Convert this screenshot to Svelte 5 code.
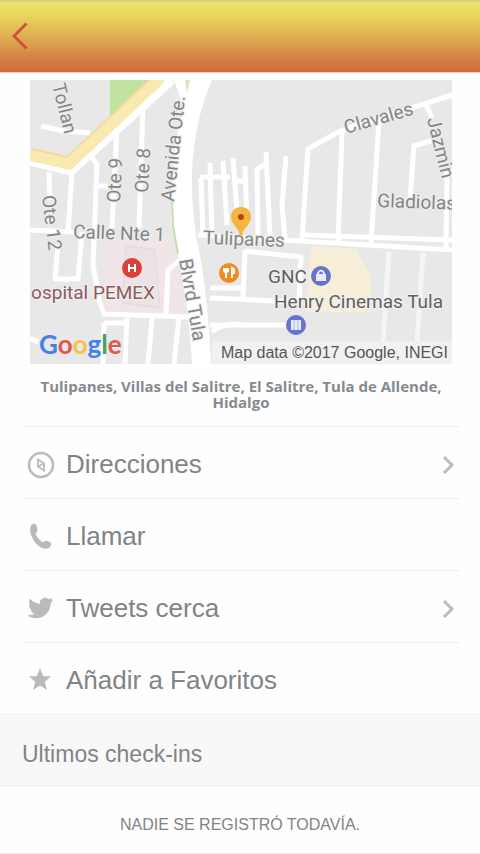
<script>
	const actions = [
		{ id: 'directions', label: 'Direcciones', icon: 'compass', more: true },
		{ id: 'call', label: 'Llamar', icon: 'phone', more: false },
		{ id: 'tweets', label: 'Tweets cerca', icon: 'bird', more: true },
		{ id: 'favorite', label: 'Añadir a Favoritos', icon: 'star', more: false }
	];

	// street centre lines, in map units
	const streets = [
		'M41 126 L64 131 L90 133',
		'M117 126 L112 228',
		'M143 103 L139 228',
		'M90 155 L97 164 L93 265 L99 300 L104 314 L190 317',
		'M97 186 H108',
		'M49 172 L50 200',
		'M72 172 L68 232',
		'M30 230 L75 232',
		'M58 245 L55 279 H78 L82 232',
		'M166 314 L168 270 L180 260',
		'M198 235 L452 250',
		'M302 235 L452 240',
		'M201 178 L203 235',
		'M200 177 H230',
		'M210 163 L212 235',
		'M223 161 L227 225',
		'M233 158 L238 225',
		'M245 166 L247 225',
		'M236 181 H245',
		'M266 152 L270 237',
		'M258 235 L257 169 L266 164',
		'M286 156 L282 205 L285 238',
		'M302 240 L308 149 L340 131 L452 95',
		'M342 131 L338 243',
		'M379 120 L371 243',
		'M426 104 L432 118',
		'M447 172 L446 248',
		'M410 200 L414 146 L434 140',
		'M245 250 L243 298',
		'M245 251 L301 257 L299 302 L210 298',
		'M210 288 H242',
		'M210 325 H290',
		'M212 332 Q224 322 240 325',
		'M104 323 H128',
		'M104 323 L103 364',
		'M127 318 L125 364',
		'M152 318 L148 364',
		'M179 318 L174 364',
		'M30 338 L38 342'
	];

	const lanes = ['M389 252 L383 342', 'M423 253 L417 342'];
</script>

<div class="page">
	<header>
		<button type="button" class="back" aria-label="Atrás">
			<svg viewBox="0 0 16 28" fill="none" aria-hidden="true">
				<path d="M14.500 1.500L2 14L14.500 26.500" stroke="currentColor" stroke-width="3" />
			</svg>
		</button>
	</header>

	<section class="place">
		<svg class="map" viewBox="30 80 422 284" role="img" aria-label="Mapa de Tulipanes">
			<rect x="30" y="80" width="422" height="284" fill="#e8e8e8" />
			<path d="M110 80H152L110 116Z" fill="#c2e2a1" />
			<path d="M106 242L172 239L186 315H104Z" fill="#f1e5e8" />
			<path d="M126 246L155 249L160 308L122 303Z" fill="#ebe2e6" stroke="#e2dae0" />
			<path d="M311 246L356 249L371 276L371 312H306Z" fill="#f6eed6" />

			<g fill="none" stroke="#f5f5f5" stroke-width="5">
				{#each lanes as d}
					<path {d} />
				{/each}
			</g>
			<g fill="none" stroke="#fff" stroke-width="5" stroke-linejoin="round">
				{#each streets as d}
					<path {d} />
				{/each}
			</g>

			<path d="M30 161L71 171L172 80" fill="none" stroke="#fff" stroke-width="9" />
			<path d="M30 154L69 163L159 78" fill="none" stroke="#f0dca0" stroke-width="13" />
			<path d="M30 155L69 164L160 79" fill="none" stroke="#fbe9b2" stroke-width="11" />
			<path
				d="M174 80H212Q195 118 192 170Q191 220 201 260Q209 310 211 364H192Q190 320 181 270L171 222Q170 190 176 140L184 108Z"
				fill="#fff"
			/>
			<path d="M185 80H190L187 93Z" fill="#d4e4c4" />
			<path d="M172 200L173 226L178 254" fill="none" stroke="#c6ddb0" stroke-width="2" />
			<rect x="212" y="341" width="240" height="23" fill="#f1f1f1" />

			<g class="street-name">
				<text transform="translate(52 85) rotate(76)">Tollan</text>
				<text transform="translate(120 203) rotate(-87)">Ote 9</text>
				<text transform="translate(148 193) rotate(-87)">Ote 8</text>
				<text transform="translate(174 202) rotate(-84)">Avenida Ote.</text>
				<text transform="translate(42 196) rotate(83)">Ote 12</text>
				<text transform="translate(73 238) rotate(2)">Calle Nte 1</text>
				<text transform="translate(179 260) rotate(80)">Blvrd Tula</text>
				<text transform="translate(203 244) rotate(2)">Tulipanes</text>
				<text transform="translate(346 134) rotate(-16)">Clavales</text>
				<text transform="translate(427 119) rotate(76)">Jazmin</text>
				<text transform="translate(377 207) rotate(2)">Gladiolas</text>
			</g>

			<g class="poi-name">
				<text class="hospital" x="155" y="299" text-anchor="end">ospital PEMEX</text>
				<text x="268" y="283">GNC</text>
				<text x="274" y="308">Henry Cinemas Tula</text>
			</g>
			<text class="credit" x="448" y="358" text-anchor="end">Map data ©2017 Google, INEGI</text>

			<text class="logo" x="39" y="354"
				><tspan fill="#4480e8">G</tspan><tspan fill="#e2574c">o</tspan><tspan fill="#f3c441">o</tspan><tspan
					fill="#4480e8">g</tspan
				><tspan fill="#3fa65a">l</tspan><tspan fill="#e2574c">e</tspan></text
			>

			<circle cx="132" cy="268" r="10" fill="#dc4038" />
			<path d="M129 264V272M135 264V272M129 268H135" stroke="#fff" stroke-width="2" />

			<circle cx="229" cy="273" r="10" fill="#f28a22" />
			<path
				d="M224 268V271Q226 274 228 271V268M226 268V278M232 278V268Q235 269 234 273H232"
				fill="none"
				stroke="#fff"
				stroke-width="2"
			/>

			<circle cx="321" cy="276" r="10" fill="#6674cd" />
			<path d="M316 274H326V281H316Z" fill="#e8ebff" />
			<path d="M318 275V273Q321 268 324 273V275" fill="none" stroke="#e8ebff" stroke-width="2" />

			<circle cx="296" cy="325" r="10" fill="#6674cd" />
			<path d="M291 320H301V330H291Z" fill="#e8ebff" />
			<path d="M294 320V330M298 320V330" stroke="#a9b2ea" />

			<path
				d="M241 207C235 207 231 211 231 217C231 225 239 227 240 236H242C243 227 251 225 251 217C251 211 247 207 241 207Z"
				fill="#f6b440"
			/>
			<circle cx="241" cy="217" r="3" fill="#b8431f" />
		</svg>
		<p class="address">Tulipanes, Villas del Salitre, El Salitre, Tula de Allende, Hidalgo</p>
	</section>

	<ul class="actions">
		{#each actions as action (action.id)}
			<li>
				<button type="button">
					<svg class="icon" viewBox="0 0 28 28" fill="none" aria-hidden="true">
						{#if action.icon === 'compass'}
							<circle cx="14" cy="14" r="12" stroke="currentColor" stroke-width="2.500" />
							<path d="M11 8.500L17 12.500V19.500L11 15.500Z" stroke="currentColor" stroke-width="1.800" />
							<path d="M11 15.500L17 12.500" stroke="currentColor" stroke-width="1.500" />
						{:else if action.icon === 'phone'}
							<path
								d="M4 2.500C5.500 0 9 0 9.500 2.500L10.500 7.500C10.600 9 9 10 8.500 10.500C9.500 14 12.500 17.500 16 19.500C17 18.500 18 17.500 19.500 17.800L23 19C25 20 24.500 23 22.500 24.500C20 26.500 16 26 12.500 23.500C7.500 20 4 13.500 3.300 8.500C3 6 3 4 4 2.500Z"
								fill="currentColor"
							/>
						{:else if action.icon === 'bird'}
							<path
								transform="translate(1.500 1)"
								d="M24 4.600a10 10 0 01-2.800.8 5 5 0 002.200-2.700c-1 .500-2 .900-3.100 1.100a4.900 4.900 0 00-8.400 4.500C7.700 8.100 4.100 6.100 1.600 3.200a4.800 4.800 0 00-.6 2.500c0 1.700.9 3.200 2.200 4.100a4.900 4.900 0 01-2.300-.6v.1a4.900 4.900 0 004 4.800 5 5 0 01-2.200.1 4.900 4.900 0 004.600 3.400 9.900 9.900 0 01-6.100 2.100c-.4 0-.8 0-1.200-.1a14 14 0 007.600 2.200c9 0 14-7.500 14-14v-.6A10 10 0 0024 4.600z"
								fill="currentColor"
								stroke="currentColor"
							/>
						{:else}
							<path
								d="M13 1L16 9L24 9.500L17.800 14.800L19.900 23L13 18.500L6.100 23L8.200 14.800L2 9.500L10 9Z"
								fill="currentColor"
							/>
						{/if}
					</svg>
					<span>{action.label}</span>
					{#if action.more}
						<svg class="chevron" viewBox="0 0 12 20" fill="none" aria-hidden="true">
							<path d="M2 2L10 10L2 18" stroke="currentColor" stroke-width="3" />
						</svg>
					{/if}
				</button>
			</li>
		{/each}
	</ul>

	<section class="checkins">
		<h2>Ultimos check-ins</h2>
		<p>NADIE SE REGISTRÓ TODAVÍA.</p>
	</section>
</div>

<style>
	:global(body) {
		margin: 0;
		background: #fefefe;
	}

	.page {
		font-family: 'Liberation Sans', Arial, sans-serif;
		color: #818486;
	}

	header {
		display: flex;
		align-items: center;
		height: 72px;
		background: linear-gradient(#d3cb86 0, #ece267 3px, #ead45c 16px, #deb052 36px, #d48b47 54px, #d1693b 72px);
		border-bottom: 1px solid #f0cdbb;
	}

	.back {
		display: flex;
		padding: 12px;
		border: none;
		background: transparent;
		color: #d4503e;
		cursor: pointer;
	}

	.back svg {
		width: 16px;
		height: 28px;
	}

	.place {
		padding: 7px 28px 16px 30px;
	}

	.map {
		display: block;
		width: 100%;
		height: auto;
		font-family: Roboto, sans-serif;
	}

	.street-name {
		font-size: 19px;
		fill: #858585;
		paint-order: stroke;
		stroke: #eee;
		stroke-width: 2px;
	}

	.poi-name {
		font-size: 19px;
		fill: #606060;
		paint-order: stroke;
		stroke: #f2f2f2;
		stroke-width: 2px;
	}

	.hospital {
		fill: #8e5a5a;
	}

	.credit {
		font-family: 'Liberation Sans', Arial, sans-serif;
		font-size: 16px;
		fill: #555;
	}

	.logo {
		font-family: Lato, sans-serif;
		font-size: 26px;
		font-weight: 700;
	}

	.address {
		margin: 14px 0 0;
		font-family: 'Open Sans', 'Noto Sans', sans-serif;
		font-size: 15px;
		font-weight: 700;
		line-height: 16px;
		text-align: center;
		color: #858a8e;
	}

	.actions {
		margin: 0;
		padding: 0 20px 0 22px;
		list-style: none;
	}

	.actions li {
		border-top: 1px solid #efefef;
	}

	.actions button {
		display: flex;
		align-items: center;
		gap: 11px;
		width: 100%;
		height: 71px;
		padding: 4px 6px 0 5px;
		border: none;
		background: transparent;
		font: inherit;
		font-size: 26px;
		text-align: left;
		color: inherit;
		cursor: pointer;
	}

	.actions span {
		flex: 1;
	}

	.icon {
		width: 28px;
		height: 28px;
		color: #b8babc;
	}

	.chevron {
		width: 12px;
		height: 20px;
		color: #bcbcbc;
	}

	h2 {
		margin: 0;
		padding: 8px 22px 0;
		border-top: 1px solid #eee;
		border-bottom: 1px solid #eee;
		background: #f8f8f8;
		font-size: 23px;
		font-weight: 400;
		line-height: 62px;
	}

	.checkins p {
		margin: 0;
		padding: 10px 0 0;
		border-bottom: 1px solid #eee;
		font-size: 16px;
		line-height: 57px;
		text-align: center;
	}
</style>
